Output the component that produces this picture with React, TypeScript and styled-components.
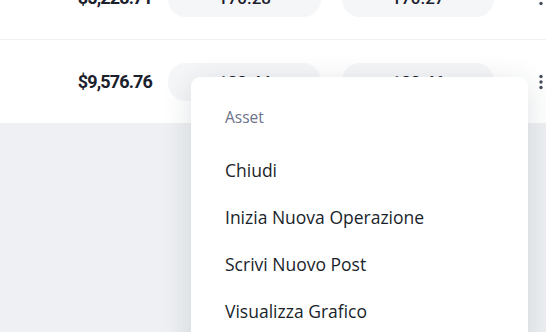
import React from 'react';
import styled, { createGlobalStyle } from 'styled-components';

interface Holding {
  id: string;
  value: string;
  bid: string;
  ask: string;
}

const holdings: Holding[] = [
  { id: 'a', value: '$5,228.71', bid: '170.28', ask: '170.27' },
  { id: 'b', value: '$9,576.76', bid: '188.44', ask: '188.46' },
];

const menuItems = ['Chiudi', 'Inizia Nuova Operazione', 'Scrivi Nuovo Post', 'Visualizza Grafico'];

const GlobalStyle = createGlobalStyle`
  html, body {
    margin: 0;
    padding: 0;
    background: #eef0f3;
    overflow: hidden;
  }
  body {
    font-family: Roboto, "Liberation Sans", sans-serif;
  }
`;

const Page = styled.div`
  position: relative;
  width: 546px;
  height: 332px;
  overflow: hidden;
  background: #eef0f3;
`;

const Table = styled.div`
  background: #ffffff;
  margin-top: -44px;
`;

const Row = styled.div<{ $divider?: boolean }>`
  display: grid;
  grid-template-columns: 168px 174px 1fr 52px;
  align-items: center;
  height: 83px;
  border-bottom: ${p => (p.$divider ? '1px solid #f0f1f4' : 'none')};
`;

const Value = styled.div`
  text-align: right;
  padding-right: 16px;
  font-size: 18px;
  font-weight: 700;
  color: #1a202c;
  letter-spacing: -0.85px;
`;

const Pill = styled.div<{ $width: number }>`
  width: ${p => p.$width}px;
  height: 38px;
  border-radius: 18px;
  background: #f5f6f8;
  display: flex;
  align-items: center;
  justify-content: center;
  font-size: 17px;
  font-weight: 500;
  color: #1a202c;
`;

const Kebab = styled.button`
  justify-self: end;
  margin-right: 1px;
  padding: 0;
  border: none;
  background: none;
  display: flex;
  width: 8px;
  height: 18px;
  align-items: center;
  justify-content: center;
  color: #464e60;
`;

const Menu = styled.div`
  position: absolute;
  top: 77px;
  left: 191px;
  width: 337px;
  height: 300px;
  background: #ffffff;
  border-radius: 9px;
  box-shadow: 0 6px 30px rgba(30, 40, 60, 0.14);
  padding-top: 24px;
  box-sizing: border-box;
  font-family: "Open Sans", "Noto Sans", sans-serif;
`;

const MenuHeader = styled.div`
  height: 32px;
  line-height: 32px;
  padding-left: 34px;
  margin-bottom: 14px;
  font-size: 15.5px;
  color: #6b7289;
`;

const MenuItem = styled.div`
  height: 47px;
  line-height: 47px;
  padding-left: 34px;
  font-size: 17.5px;
  color: #1a1f2b;
  white-space: nowrap;
`;

const DotsIcon = () => (
  <svg width="4" height="16" viewBox="0 0 4 16" fill="currentColor">
    <circle cx="2" cy="2.5" r="1.7" />
    <circle cx="2" cy="8" r="1.7" />
    <circle cx="2" cy="13.5" r="1.7" />
  </svg>
);

export default function App() {
  return (
    <>
      <GlobalStyle />
      <Page>
        <Table>
          {holdings.map((h, i) => (
            <Row key={h.id} $divider={i < holdings.length - 1}>
              <Value>{h.value}</Value>
              <Pill $width={153}>{h.bid}</Pill>
              <Pill $width={152}>{h.ask}</Pill>
              <Kebab aria-label="Azioni">
                <DotsIcon />
              </Kebab>
            </Row>
          ))}
        </Table>
        <Menu>
          <MenuHeader>Asset</MenuHeader>
          {menuItems.map(item => (
            <MenuItem key={item}>{item}</MenuItem>
          ))}
        </Menu>
      </Page>
    </>
  );
}
